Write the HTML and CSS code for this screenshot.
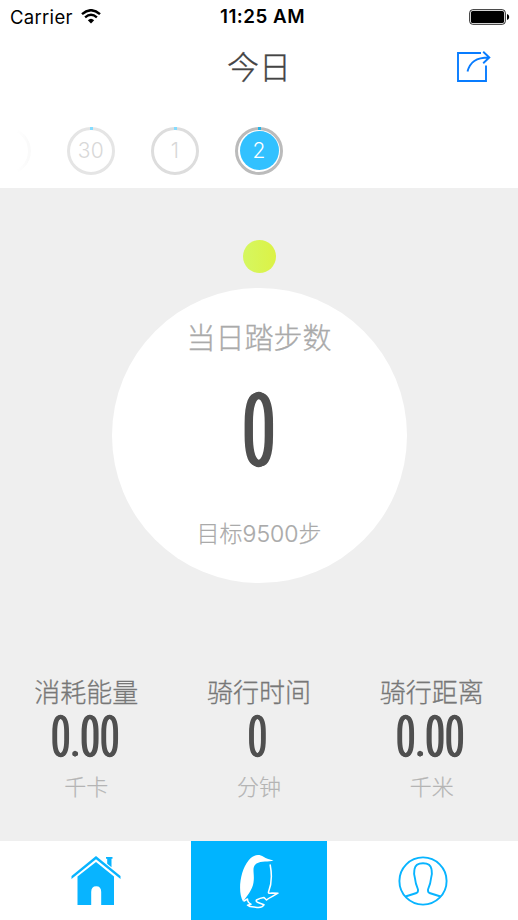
FILE: index.html
```html
<!DOCTYPE html>
<html lang="zh-CN">
<head>
<meta charset="utf-8">
<title>今日</title>
<link rel="stylesheet" href="styles.css">
</head>
<body>
<div class="app">
  <header class="status">
    <div class="carrier"><span>Carrier</span>
      <svg width="20" height="15" viewBox="0 0 20 15" fill="none" stroke="#000" stroke-width="2.4"><path d="M1 5.2Q10-2.8 19 5.2M4.1 8.4Q10 3.3 15.9 8.4"/><path d="M6.8 11.2Q10 8.2 13.2 11.2L10 14.4Z" fill="#000" stroke="none"/></svg>
    </div>
    <div class="clock">11:25 AM</div>
    <svg class="battery" width="41" height="16" viewBox="0 0 41 16"><rect x=".7" y=".7" width="35.6" height="14.6" rx="3" fill="none" stroke="#222"/><rect x="2" y="2" width="33" height="12" rx="1.6"/><path d="M38 5Q40.2 5.5 40.2 8T38 11Z"/></svg>
  </header>
  <nav class="title">
    <h1>今日</h1>
    <svg class="share" width="36" height="32" viewBox="0 0 36 32" fill="none" stroke="#087cff" stroke-width="1.9"><path d="M25 2H2V30H30V14.5M11.5 20.5C14 11 20 6.5 33 6.5M27.2.8L33.3 6.5L27.2 12.2"/></svg>
  </nav>
  <div class="days">
    <div class="day faded"></div>
    <div class="day dim">30</div>
    <div class="day past">1</div>
    <div class="day current"><span>2</span></div>
  </div>
  <main class="board">
    <div class="dot"></div>
    <section class="dial">
      <div class="dial-label">当日踏步数</div>
      <div class="dial-value"><span>0</span></div>
      <div class="dial-goal">目标9500步</div>
    </section>
    <section class="stats">
      <div class="stat"><div class="name">消耗能量</div><div class="value"><span>0.00</span></div><div class="unit">千卡</div></div>
      <div class="stat"><div class="name">骑行时间</div><div class="value"><span>0</span></div><div class="unit">分钟</div></div>
      <div class="stat"><div class="name">骑行距离</div><div class="value"><span>0.00</span></div><div class="unit">千米</div></div>
    </section>
  </main>
  <footer class="tabs">
    <div class="tab"><svg width="50" height="50" viewBox="0 0 50 50" fill="#08b4ff"><path d="M25 0L49.5 20V23L25 3.3L.5 23V20Z"/><path d="M35 1H41.5V2.8H40.5V11.2L36.2 7.7V2.8H35Z"/><path d="M25 6L43 20.5V49H30.2V36Q30.2 30.2 25.2 30.2T20.2 36V49H6.5V20.5Z"/></svg></div>
    <div class="tab active"><svg width="42" height="56" viewBox="0 0 42 56"><path fill="#fff" d="M5 48.5C-.5 39 2 18 10.5 7.5C15 1.5 21 .8 25.5 3.8C28 5.8 32 6.3 35.5 7.6C31 9.2 23 8 18.5 10.5C13 14.5 17 20 15.5 29.5C14.5 37 9 43 5 48.5Z"/><path fill="none" stroke="#fff" stroke-width="1.5" stroke-linejoin="round" stroke-linecap="round" d="M32.2 12C34.5 24 33 33 30.5 39Q30 41 34 40L40 40.2C35 43.5 31 44.5 28.5 47L26 44.5Q22 45 18.5 47Q17.5 48.5 20 49.5L26 51.8Q24 55 19 54.4L12 53.6L9.5 52.2L13 51.2Q9.5 49.5 9.5 46L6 48"/></svg></div>
    <div class="tab"><svg width="50" height="50" viewBox="0 0 50 50" fill="none" stroke="#08b4ff" stroke-width="1.9"><circle cx="25" cy="25" r="23.6"/><path d="M7.5 40.5L18.5 37Q20.3 36.2 20 33.5Q17.3 27 16.9 22Q15.6 18 16.4 13.5Q17.3 7.2 25 7.2T33.6 13.5Q34.4 18 33.1 22Q32.7 27 30 33.5Q29.7 36.2 31.5 37L42.5 40.5"/></svg></div>
  </footer>
</div>
</body>
</html>
```

FILE: styles.css
```css
* { box-sizing: border-box; }
body { margin: 0; background: #fff; font-family: Inter, "Noto Sans CJK SC", sans-serif; }
svg { display: block; }
.app { width: 518px; height: 920px; overflow: hidden; display: flex; flex-direction: column; }
.status { height: 33px; flex: none; display: grid; grid-template-columns: 1fr 120px 1fr; align-items: center; padding: 0 8px 0 10px; color: #000; }
.carrier { display: flex; align-items: center; gap: 8px; font-size: 18.5px; letter-spacing: .3px; }
.clock { font-size: 18.8px; font-weight: 600; letter-spacing: .5px; text-align: center; white-space: nowrap; padding-left: 5px; }
.battery { justify-self: end; }
.title { height: 67px; flex: none; display: grid; grid-template-columns: 1fr 100px 1fr; padding-right: 26px; padding-left: 26px; align-items: center; }
.title h1 { grid-column: 2; margin: 0; text-align: center; font: 300 32px/62px "Noto Sans CJK SC", sans-serif; color: #444; -webkit-text-stroke: .3px #444; padding-bottom: 4px; }
.share { justify-self: end; }
.days { height: 88px; flex: none; display: flex; gap: 36px; padding: 26.5px 0 0; margin-left: -17px; }
.day { position: relative; width: 48px; height: 48px; flex: none; border: 3px solid #ddd; border-radius: 50%; display: flex; align-items: center; justify-content: center; font-size: 21px; font-weight: 300; color: #d8d8d8; }
.day::before { content: ""; position: absolute; top: -3px; left: 19.5px; width: 3px; height: 3px; background: #84dcff; }
.day.faded { border-color: #f9f9f9; -webkit-mask-image: linear-gradient(90deg, transparent 70%, #000); mask-image: linear-gradient(90deg, transparent 70%, #000); }
.day.faded::before { display: none; }
.day.dim { border-color: #e5e5e5; letter-spacing: .5px; }
.day.current { border-color: #bbb; color: #fff; }
.day.current::before { background: #24b5e9; }
.day.current span { width: 39px; height: 39px; flex: none; border-radius: 50%; background: #32c1ff; text-align: center; line-height: 39px; font-weight: 300; }
.board { height: 653px; flex: none; background: #efefef; display: flex; flex-direction: column; align-items: center; }
.dot { width: 33px; height: 33px; flex: none; margin-top: 52px; border-radius: 50%; background: linear-gradient(90deg, #d5f760, #dcf246); }
.dial { width: 295px; height: 295px; flex: none; margin-top: 15px; border-radius: 50%; background: #fff; display: flex; flex-direction: column; align-items: center; }
.dial-label { height: 40px; margin-top: 31px; line-height: 40px; font-size: 29px; font-weight: 300; color: #aaa; -webkit-text-stroke: .3px #aaa; }
.dial-value { height: 76px; margin-top: 34px; display: flex; align-items: center; font: 300 100px/76px Roboto, sans-serif; color: #505050; -webkit-text-stroke: 2.4px #505050; }
.dial-value span { transform: scaleX(.53); text-shadow: -2.5px 0, -5px 0, 2.5px 0, 5px 0; }
.dial-goal { height: 34px; margin-top: 48px; line-height: 34px; font-size: 23px; font-weight: 300; color: #aaa; -webkit-text-stroke: .2px #aaa; }
.stats { width: 518px; display: grid; grid-template-columns: repeat(3, 1fr); margin-top: 92px; text-align: center; }
.name { height: 36px; line-height: 36px; font-size: 26px; font-weight: 300; color: #777; -webkit-text-stroke: .3px #777; }
.value { height: 44px; margin-top: 4px; display: flex; justify-content: center; font: 300 56px/44px Roboto, sans-serif; color: #505050; -webkit-text-stroke: 1.5px #505050; }
.value span { transform: scaleX(.56); letter-spacing: 4px; margin-right: -2px; text-shadow: -1.4px 0, -2.8px 0, 1.4px 0, 2.8px 0; }
.value { padding-right: 3px; }
.unit { height: 34px; margin-top: 11px; line-height: 34px; font-size: 22px; font-weight: 300; color: #b4b4b4; -webkit-text-stroke: .2px #b4b4b4; }
.tabs { height: 79px; flex: none; display: grid; grid-template-columns: 191px 136px 191px; }
.tab { display: flex; align-items: center; justify-content: center; }
.tab.active { background: #00b4ff; }
```
